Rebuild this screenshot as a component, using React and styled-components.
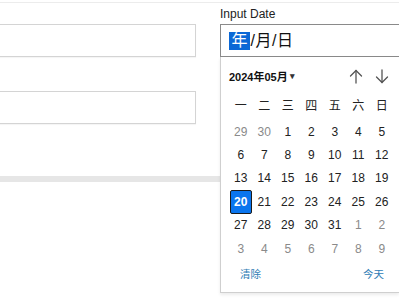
import React from "react";
import styled, { createGlobalStyle } from "styled-components";

const GlobalStyle = createGlobalStyle`
  html, body {
    margin: 0;
    padding: 0;
    background: #fff;
    overflow: hidden;
  }
  body {
    font-family: "Liberation Sans", "Noto Sans CJK SC", Arial, sans-serif;
    color: #222;
  }
`;

const weekdays = ["一", "二", "三", "四", "五", "六", "日"];

// 6 rows, { d, muted }
const days = [
  ...[29, 30].map((d) => ({ d, muted: true })),
  ...Array.from({ length: 31 }, (_, i) => ({ d: i + 1, muted: false })),
  ...Array.from({ length: 9 }, (_, i) => ({ d: i + 1, muted: true })),
];

function ArrowIcon({ down }) {
  return (
    <svg width="14" height="15" viewBox="0 0 14 15" fill="none">
      <g
        stroke="#555"
        strokeWidth="1.3"
        strokeLinecap="round"
        strokeLinejoin="round"
        transform={down ? "rotate(180 7 7.5)" : undefined}
      >
        <path d="M7 1.5 V14" />
        <path d="M1.5 7 L7 1.5 L12.5 7" />
      </g>
    </svg>
  );
}

export default function App() {
  return (
    <Page>
      <GlobalStyle />
      <TopRule />
      <Form>
        <LeftCol>
          <TextBox />
          <TextBox />
        </LeftCol>
        <RightCol>
          <Label>Input Date</Label>
          <DateField>
            <Seg $active>年</Seg>
            <Sep>/</Sep>
            <Seg>月</Seg>
            <Sep>/</Sep>
            <Seg>日</Seg>
          </DateField>
          <Popup>
            <PopupHead>
              <MonthPick>
                2024年05月 <Caret>▾</Caret>
              </MonthPick>
              <NavBtns>
                <ArrowIcon />
                <ArrowIcon down />
              </NavBtns>
            </PopupHead>
            <Weekdays>
              {weekdays.map((w) => (
                <WeekCell key={w}>{w}</WeekCell>
              ))}
            </Weekdays>
            <DayGrid>
              {days.map((x, i) => (
                <DayCell key={i} $muted={x.muted} $selected={!x.muted && x.d === 20}>
                  {x.d}
                </DayCell>
              ))}
            </DayGrid>
            <PopupFoot>
              <LinkBtn>清除</LinkBtn>
              <LinkBtn>今天</LinkBtn>
            </PopupFoot>
          </Popup>
        </RightCol>
      </Form>
      <Divider />
    </Page>
  );
}

const Page = styled.div`
  position: relative;
  width: 399px;
  height: 300px;
  padding-top: 2px;
  box-sizing: border-box;
`;

const TopRule = styled.div`
  height: 1px;
  background: #ececec;
`;

const Form = styled.div`
  display: grid;
  grid-template-columns: 196px 1fr;
  column-gap: 24px;
`;

const LeftCol = styled.div`
  display: flex;
  flex-direction: column;
  gap: 34px;
  padding-top: 21px;
`;

const TextBox = styled.div`
  height: 31px;
  border: 1px solid #d4d4d4;
  border-left: none;
  box-shadow: 0 1px 1px rgba(0, 0, 0, 0.04);
  background: #fff;
`;

const RightCol = styled.div`
  position: relative;
  padding-top: 3px;
`;

const Label = styled.div`
  font-size: 12px;
  line-height: 16px;
  color: #222;
  height: 18px;
`;

const DateField = styled.div`
  display: flex;
  align-items: center;
  height: 31px;
  border: 1px solid #8a8a8a;
  border-right: none;
  padding-left: 8px;
  font-size: 16px;
  color: #111;
  background: #fff;
`;

const Seg = styled.span`
  display: inline-block;
  padding: ${(p) => (p.$active ? "0 2.5px" : "0")};
  line-height: 18px;
  background: ${(p) => (p.$active ? "#0b68d6" : "transparent")};
  color: ${(p) => (p.$active ? "#fff" : "#111")};
`;

const Sep = styled.span`
  line-height: 18px;
  padding: 0 0.5px;
`;

const Popup = styled.div`
  position: absolute;
  left: 0;
  top: 54px;
  width: 179px;
  height: 236px;
  box-sizing: border-box;
  background: #fff;
  border: 1px solid #cfcfcf;
  border-top: none;
  border-right: none;
  box-shadow: 0 2px 3px rgba(0, 0, 0, 0.08);
  padding: 0 0 0 8px;
  z-index: 2;
`;

const PopupHead = styled.div`
  display: flex;
  align-items: center;
  justify-content: space-between;
  height: 38px;
  padding-right: 10px;
`;

const MonthPick = styled.div`
  font-size: 11px;
  font-weight: bold;
  color: #111;
  display: flex;
  align-items: center;
  gap: 2px;
`;

const Caret = styled.span`
  font-size: 9px;
  color: #333;
`;

const NavBtns = styled.div`
  display: flex;
  gap: 12px;
  align-items: center;
`;

const Weekdays = styled.div`
  display: grid;
  grid-template-columns: repeat(7, 23.5px);
  height: 25px;
  align-items: start;
`;

const WeekCell = styled.div`
  text-align: center;
  font-size: 12px;
  line-height: 22px;
  color: #222;
`;

const DayGrid = styled.div`
  display: grid;
  grid-template-columns: repeat(7, 23.5px);
  grid-auto-rows: 23.4px;
`;

const DayCell = styled.div`
  display: flex;
  align-items: center;
  justify-content: center;
  font-size: 12px;
  color: ${(p) => (p.$muted ? "#8a8a8a" : "#222")};
  ${(p) =>
    p.$selected &&
    `
    margin: 0 1px;
    background: #0a75ee;
    color: #fff;
    font-weight: bold;
    border: 1.5px solid #1b1b1b;
    border-radius: 2px;
    box-sizing: border-box;
  `}
`;

const PopupFoot = styled.div`
  display: flex;
  justify-content: space-between;
  align-items: center;
  width: 164px;
  height: 27px;
  padding: 0 9px 0 11px;
  box-sizing: border-box;
`;

const LinkBtn = styled.span`
  font-size: 10.5px;
  color: #2f7cb5;
`;

const Divider = styled.div`
  margin-top: 52px;
  height: 6px;
  background: #e6e6e6;
`;
